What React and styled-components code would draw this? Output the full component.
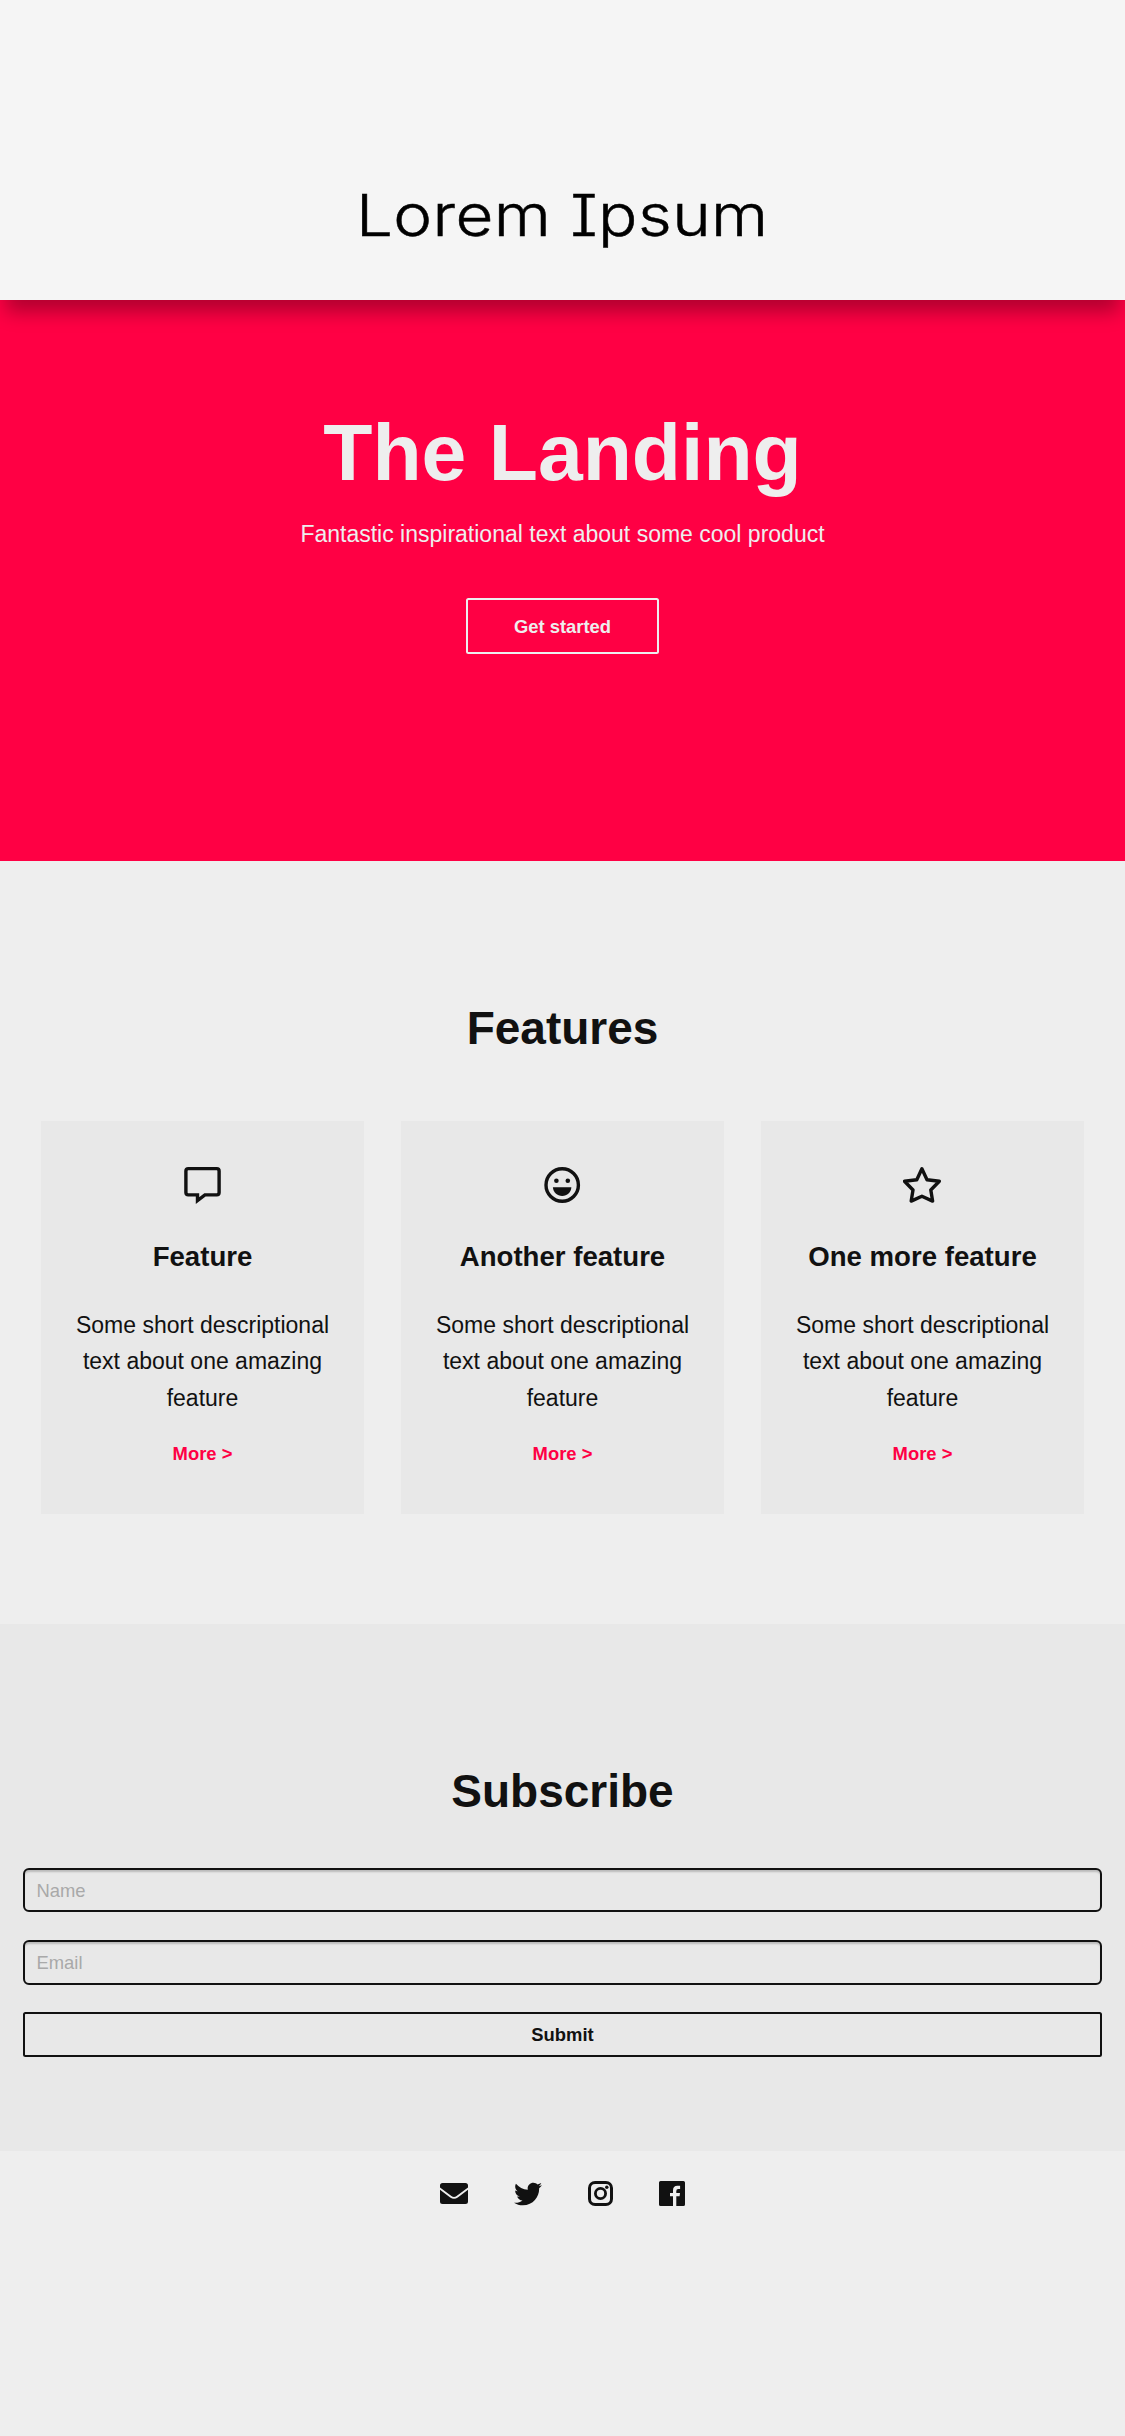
import React from "react";
import styled, { createGlobalStyle } from "styled-components";
import { FaTwitter } from "react-icons/fa";

const Base = createGlobalStyle`
  * { box-sizing: border-box; }
  body {
    margin: 0;
    background: #eee;
    color: #111;
    font: 23px/36.6px "Liberation Sans", Arial, sans-serif;
  }
  h1, h2, h3, p { margin: 0; }
`;

const Page = styled.div`
  min-height: 2436px;
  display: flex;
  flex-direction: column;
`;

const Header = styled.header`
  height: 300px;
  padding-top: 173px;
  background: #f5f5f5;
  box-shadow: 0 18px 18px -6px rgba(0, 0, 0, 0.3);
  z-index: 1;
  display: flex;
  justify-content: center;
`;

const Brand = styled.div`
  font-family: Inter, sans-serif;
  font-feature-settings: "cv08";
  font-weight: 300;
  font-size: 57.8px;
  line-height: 84px;
  letter-spacing: 0.4px;
  transform: scaleX(1.132);
  -webkit-text-stroke: 0.5px #000;
  color: #000;
  white-space: nowrap;
`;

const Hero = styled.section`
  height: 561px;
  padding-top: 103.6px;
  background: #ff0044;
  color: #eee;
  display: flex;
  flex-direction: column;
  align-items: center;
`;

const HeroTitle = styled.h1`
  font-size: 80.5px;
  line-height: 97px;
`;

const Tagline = styled.p`
  margin-top: 15.3px;
  line-height: 36.8px;
`;

const Button = styled.button`
  font: bold 18.4px "Liberation Sans", Arial, sans-serif;
  color: inherit;
  background: transparent;
  border: 2.3px solid currentColor;
  border-radius: 2.5px;
  padding: 1.5px 0 0;
`;

const HeroButton = styled(Button)`
  width: 193.7px;
  height: 56px;
  margin-top: 45.6px;
`;

const Section = styled.section`
  padding-top: 137px;
  height: ${(p) => p.$height}px;
  background: ${(p) => p.$background};
`;

const SectionTitle = styled.h2`
  font-size: 46px;
  line-height: 60px;
  text-align: center;
`;

const Cards = styled.div`
  display: grid;
  grid-template-columns: repeat(3, 1fr);
  gap: 37.5px;
  padding: 0 41.25px;
  margin-top: 63px;
`;

const Card = styled.article`
  height: 392.5px;
  padding: 44px 28px 0;
  background: #e8e8e8;
  display: flex;
  flex-direction: column;
  align-items: center;
  text-align: center;
`;

const CardIcon = styled.svg`
  width: 40px;
  height: 40px;
  flex: none;
  fill: none;
  stroke: #111;
  stroke-width: 3.4;
`;

const CardTitle = styled.h3`
  margin-top: 34.4px;
  font-size: 27.6px;
  line-height: 36px;
  white-space: nowrap;
`;

const CardText = styled.p`
  margin-top: 31.5px;
`;

const More = styled.a`
  margin-top: 25.8px;
  font-size: 18.4px;
  font-weight: bold;
  line-height: 24px;
  color: #ff0044;
`;

const Form = styled.form`
  display: flex;
  flex-direction: column;
  gap: 27.6px;
  margin-top: 46.6px;
  padding: 0 23px;
`;

const Field = styled.input`
  height: 44.7px;
  width: 100%;
  padding: 1.5px 11.5px 0;
  font: 18.4px "Liberation Sans", Arial, sans-serif;
  background: transparent;
  border: 2.3px solid #111;
  border-radius: 6px;
  box-shadow: inset 0 3px 2px -1px rgba(0, 0, 0, 0.2);
  &::placeholder {
    color: #a9a9a9;
    opacity: 1;
  }
`;

const Submit = styled(Button)`
  height: 44.7px;
`;

const Footer = styled.footer`
  height: 85px;
  display: flex;
  justify-content: center;
  align-items: center;
  gap: 46px;
  color: #111;
  svg { display: block; fill: currentColor; }
`;

const CommentIcon = () => (
  <CardIcon viewBox="0.4 0 40 40">
    <path d="M5.6 3.6H34.2Q36.5 3.6 36.5 5.9V27.6Q36.5 29.9 34.2 29.9H22.3L14.9 35.5V29.9H5.6Q3.3 29.9 3.3 27.6V5.9Q3.3 3.6 5.6 3.6Z" />
  </CardIcon>
);

const SmileIcon = () => (
  <CardIcon viewBox="0.4 0 40 40">
    <circle cx="19.6" cy="20" r="16.2" />
    <g fill="#111" stroke="none">
      <circle cx="13.8" cy="15.7" r="2.3" />
      <circle cx="25.2" cy="15.7" r="2.3" />
      <path d="M10.3 22.3H28.8C28.5 27.5 24.6 31 19.6 31C14.5 31 10.6 27.5 10.3 22.3Z" />
    </g>
  </CardIcon>
);

const StarIcon = () => (
  <CardIcon viewBox="0.5 0 40 40" strokeLinejoin="round">
    <path d="M19.4 3.8L24.5 14.7L36.8 16.2L28.3 25L30.1 36.1L19.4 31.2L8.7 36.1L10.5 25L2 16.2L14.3 14.7Z" />
  </CardIcon>
);

const MailIcon = () => (
  <svg width="28" height="21" viewBox="0 0 28 21">
    <path d="M2.6 0H25.4Q28 0 28 2.6V4.4L16.6 13Q14 15 11.4 13L0 4.4V2.6Q0 0 2.6 0Z" />
    <path d="M0 6.7L10.2 14.5Q14 17.2 17.8 14.5L28 6.7V18.5Q28 21 25.4 21H2.6Q0 21 0 18.5Z" />
  </svg>
);

const Outline = styled.g`
  fill: none;
  stroke: currentColor;
`;

const InstagramIcon = () => (
  <svg width="25" height="25" viewBox="0 0 25 25">
    <Outline>
      <rect x="1.5" y="1.5" width="22" height="22" rx="5.6" strokeWidth="3" />
      <circle cx="12.5" cy="12.5" r="5.1" strokeWidth="2.8" />
    </Outline>
    <circle cx="18.8" cy="6.2" r="1.7" />
  </svg>
);

const FacebookIcon = () => (
  <svg width="26" height="25" viewBox="0 0 26 25">
    <path d="M1.6 0H24.4Q26 0 26 1.6V23.4Q26 25 24.4 25H17.3V15.2H20.6L21 12H17.3V10Q17.3 8.1 19.2 8.1H21.1V4.8H18.4Q14 4.8 14 9.4V12H11V15.2H14V25H1.6Q0 25 0 23.4V1.6Q0 0 1.6 0Z" />
  </svg>
);

const features = [
  { Icon: CommentIcon, title: "Feature" },
  { Icon: SmileIcon, title: "Another feature" },
  { Icon: StarIcon, title: "One more feature" },
];

export default function App() {
  return (
    <Page>
      <Base />
      <Header>
        <Brand>Lorem Ipsum</Brand>
      </Header>
      <Hero>
        <HeroTitle>The Landing</HeroTitle>
        <Tagline>Fantastic inspirational text about some cool product</Tagline>
        <HeroButton>Get started</HeroButton>
      </Hero>
      <Section $height={763} $background="#eee">
        <SectionTitle>Features</SectionTitle>
        <Cards>
          {features.map(({ Icon, title }) => (
            <Card key={title}>
              <Icon />
              <CardTitle>{title}</CardTitle>
              <CardText>Some short descriptional text about one amazing feature</CardText>
              <More>More &gt;</More>
            </Card>
          ))}
        </Cards>
      </Section>
      <Section $height={527} $background="#e8e8e8">
        <SectionTitle>Subscribe</SectionTitle>
        <Form>
          <Field placeholder="Name" />
          <Field placeholder="Email" />
          <Submit type="button">Submit</Submit>
        </Form>
      </Section>
      <Footer>
        <MailIcon />
        <FaTwitter size={28} />
        <InstagramIcon />
        <FacebookIcon />
      </Footer>
    </Page>
  );
}
